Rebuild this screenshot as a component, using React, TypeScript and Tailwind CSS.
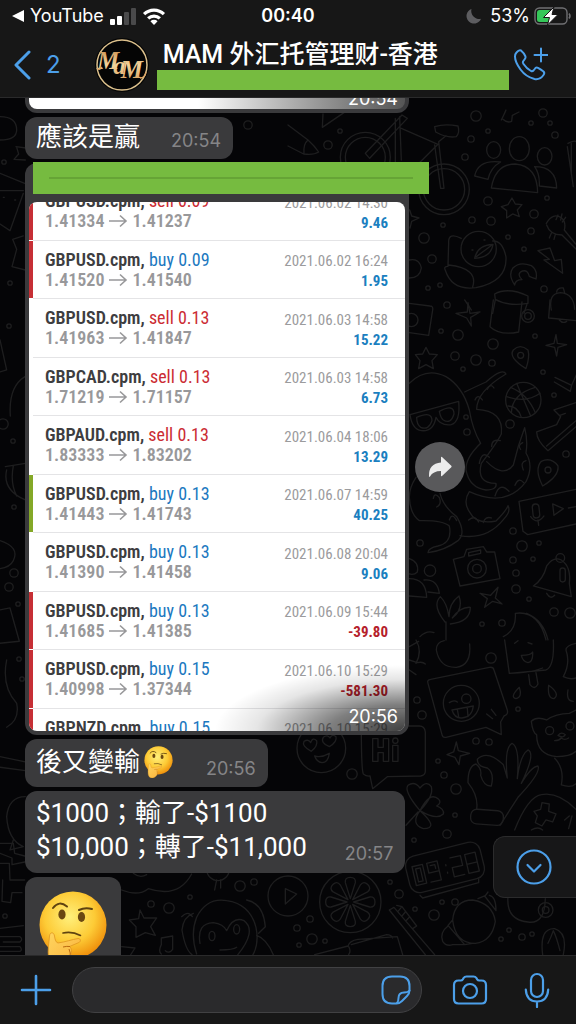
import type { ReactNode } from "react";
import clsx from "clsx";

type Trade = {
  symbol: string;
  side: "buy" | "sell";
  lots: string;
  open: string;
  close: string;
  date: string;
  profit: string;
  bar?: "red" | "green";
};

const trades: Trade[] = [
  { symbol: "GBPUSD.cpm", side: "sell", lots: "0.09", open: "1.41334", close: "1.41237", date: "2021.06.02 14:30", profit: "9.46", bar: "red" },
  { symbol: "GBPUSD.cpm", side: "buy", lots: "0.09", open: "1.41520", close: "1.41540", date: "2021.06.02 16:24", profit: "1.95", bar: "red" },
  { symbol: "GBPUSD.cpm", side: "sell", lots: "0.13", open: "1.41963", close: "1.41847", date: "2021.06.03 14:58", profit: "15.22" },
  { symbol: "GBPCAD.cpm", side: "sell", lots: "0.13", open: "1.71219", close: "1.71157", date: "2021.06.03 14:58", profit: "6.73" },
  { symbol: "GBPAUD.cpm", side: "sell", lots: "0.13", open: "1.83333", close: "1.83202", date: "2021.06.04 18:06", profit: "13.29" },
  { symbol: "GBPUSD.cpm", side: "buy", lots: "0.13", open: "1.41443", close: "1.41743", date: "2021.06.07 14:59", profit: "40.25", bar: "green" },
  { symbol: "GBPUSD.cpm", side: "buy", lots: "0.13", open: "1.41390", close: "1.41458", date: "2021.06.08 20:04", profit: "9.06" },
  { symbol: "GBPUSD.cpm", side: "buy", lots: "0.13", open: "1.41685", close: "1.41385", date: "2021.06.09 15:44", profit: "-39.80", bar: "red" },
  { symbol: "GBPUSD.cpm", side: "buy", lots: "0.15", open: "1.40998", close: "1.37344", date: "2021.06.10 15:29", profit: "-581.30", bar: "red" },
  { symbol: "GBPNZD.cpm", side: "buy", lots: "0.15", open: "", close: "", date: "2021.06.10 15:29", profit: "", bar: "red" },
];

/* Small bubbles scattered between the doodles: x, y, radius */
const dots = [
  [476, 116, 6], [543, 113, 5], [531, 123, 3], [550, 123, 3], [555, 135, 4], [488, 131, 3], [471, 139, 4], [465, 157, 4], [328, 145, 5],
  [340, 131, 3], [488, 201, 5], [547, 198, 3], [534, 214, 5], [472, 220, 4], [491, 221, 5], [443, 225, 3], [424, 238, 6], [508, 237, 3],
  [531, 231, 4], [432, 259, 5], [524, 249, 3], [440, 285, 3], [428, 288, 3], [544, 289, 4], [447, 305, 4], [248, 125, 5], [458, 335, 6],
  [493, 344, 6], [441, 331, 3], [455, 356, 5], [476, 360, 6], [492, 363, 4], [463, 369, 3], [535, 336, 3], [543, 372, 3], [554, 395, 3],
  [510, 424, 5], [566, 454, 4], [466, 417, 3], [467, 432, 4], [513, 531, 4], [522, 546, 6], [539, 543, 3], [513, 560, 4], [533, 559, 3],
  [516, 573, 4], [516, 589, 5], [529, 599, 3], [554, 612, 5], [570, 613, 6], [482, 624, 3], [502, 623, 4], [420, 543, 4], [491, 658, 6],
  [417, 700, 4], [422, 715, 5], [518, 709, 3], [476, 741, 4], [489, 742, 4], [352, 774, 6], [438, 761, 3], [444, 775, 4], [456, 789, 6],
  [455, 815, 3], [414, 840, 3], [447, 834, 5], [390, 882, 3], [399, 894, 5], [434, 915, 6], [442, 902, 3], [455, 902, 4], [415, 909, 3],
  [310, 919, 4], [312, 939, 6], [297, 928, 4], [299, 945, 3], [325, 941, 3], [501, 939, 3], [522, 937, 4], [509, 930, 3], [532, 934, 3],
  [240, 886, 6], [254, 882, 4], [169, 908, 6], [151, 904, 4], [190, 897, 3], [5, 916, 3], [4, 162, 3], [10, 283, 3], [9, 326, 3],
  [3, 424, 6], [13, 441, 3], [14, 507, 3], [14, 573, 5], [9, 587, 5], [18, 604, 3], [19, 659, 3], [22, 679, 3],
];

function Wallpaper() {
  return (
    <svg
      aria-hidden="true"
      viewBox="0 98 576 858"
      preserveAspectRatio="xMinYMin slice"
      className="absolute inset-0 h-full w-full"
      fill="none"
      stroke="#1e1e1f"
      strokeLinecap="round"
      strokeLinejoin="round"
    >
      <g strokeWidth="1.3">
        {dots.map(([x, y, r]) => (
          <circle key={`${x}-${y}`} cx={x} cy={y} r={r - 0.8} />
        ))}
      </g>

      {/* bicycle, people, duck, guitar */}
      <g transform="translate(288 110) scale(.3333)" strokeWidth="4">
        <circle cx="232" cy="142" r="75" />
        <circle cx="232" cy="142" r="60" />
        <circle cx="468" cy="238" r="76" />
        <circle cx="468" cy="238" r="62" />
        <path d="M232 130l110-115 16 10L245 145zM340 55l110 48-60 60M335 20l5 130M322 25v130M440 105l18 130h10L452 95l22-18M440 50q30-10 70-2 6 20-5 32-28 5-62-14z" />
        <path d="M0 45l60 45q20 18 32 36-15 10-45 6L0 108M60 90q-15 12-12 42" />
        <path d="M105 12l-2 40 65-44" />
        <ellipse cx="617" cy="120" rx="21" ry="25" />
        <ellipse cx="694" cy="116" rx="30" ry="36" />
        <ellipse cx="770" cy="139" rx="22" ry="26" />
        <path d="M560 198q10-50 78-42-30 16-38 52zM610 234q12-72 72-72 66 6 67 86zM740 170q65 0 66 64l-52-6q2-36-14-58z" />
        <path d="M672 264l10 18 20 2-14 16 6 20-20-8-18 12 0-22-16-12 20-6z" />
        <path d="M640 30q10-20 14-30M645 28q12 12 26 6l2-18 20-10" />
        <path d="M840 100q20-10 24-5M838 110l18 120M850 100v90" />
        <circle cx="572" cy="417" r="53" />
        <path d="M560 445q8-40 55-42-6 40-55 42zM565 440l46-34M520 385q-40-20-38 14l-2 70q-14 0-8 12 20 62 92 52 94-18 90-92-10-50-40-48M482 465q90 10 72 66M552 420h3M588 390h3" />
        <path d="M775 340q20-34 46-16 14 12 8 36l34 42M776 345q10 30 46 30l42 42M810 315l-6 14M822 312l-4 18M833 322l-10 14M790 370l-6 14M802 374l-4 14" />
        <path d="M750 422l36-8 14 38 20-4 4 42-56-40 16-2z" />
        <path d="M680 525q-20-30-6-50 20-22 56-8 20 14 14 40-12-4-20-8-4-20-20-16-20 8-2 26-20 0-22 16z" />
        <path d="M620 552q40-22 100 6v22q-60 10-98-12zM622 570l-8 40M718 580l-10 30M790 600q-10-50 28-52 40 4 42 50M806 546q2-14 20-12l4 14M530 570l20 30" />
        <path d="M365 300l6 18 22 6-22 10-5 20M364 450q30-6 36 24-4 30-36 30" />
      </g>

      {/* octopus, ball, camera, bell */}
      <g transform="translate(400 300) scale(.3333)" strokeWidth="4">
        <path d="M28 250q50-50 110-20 50 30 70 100 10 60 34 100-46 44-44 80 10 54 60 60 34 0 30-20-60 0-44-60 46-60 60-88 8-70-74-74 0-54 88-106-10-20-60 24-44 20-64 30" />
        <path d="M260 485q50 50 80 10 14-60 34-112 10 40 4 76 24 40 0 86-60 80-170 30-20 30 0 60 20 40 80 28 30-30 36-46 10 18-14 42-50 62-130 48M120 580q10 40 50 70 30 50 4 72-40 30-90 36 0-14 30-20 44-10 34-60-20-18-90-16-28-20-30-70 0-30 20-60" />
        <path d="M30 344l146-40q6 60-22 70-34 4-46-22-8 44-44 40-28-4-34-48zM50 352q46-20 46 10-10 30-34 20-12-8-12-30zM118 334q44-24 44 8-10 32-32 18-8-6-12-26z" />
        <path d="M225 300q8-20 22 0M262 268q10-20 20-4M275 440q0-24 26-18M238 490q8-40 30-18M285 588q14-44 42-14M345 556q10-26 26-8M370 510q-10-24 8-28M362 448q-10-12 6-20M206 660q20-16 30 6M250 668q6-20 24-14" />
        <path d="M100 595q4-20 18-2 8 20-8 28M148 660q8-24 22 2" />
        <path d="M78 142l10 20 24 2-16 18 4 24-22-12-22 12 4-24-14-18 22-2z" />
        <path d="M204 8l6 32 30-4-28 16 2 26-14-24-32-14 34-4zM468 104l4 26 28 4-26 8-4 26-6-26-26-6 24-6zM240 880l32 6 22-24-8 32 20 18-28-8-24 18 8-26z" />
        <circle cx="370" cy="300" r="53" />
        <path d="M332 262q50 20 74 76M406 262q-70 20-72 76M350 250l42 98M320 290q60 20 100-10M324 318q30 0 40 34" />
        <path d="M378 206q-54-34-38-56 20-20 44 0 6 20-6 56zM428 558q-26-50-4-74 30-14 50 14 4 30-46 60z" />
        <circle cx="362" cy="166" r="9" />
        <circle cx="444" cy="510" r="9" />
        <path d="M280 0l-10 80q30 28 86 16l10-90" />
        <circle cx="384" cy="48" r="19" />
        <circle cx="384" cy="48" r="10" />
        <path d="M28 10l62 8q10 0 8 12l-12 76-58-8M450 0l-4 54 82 8M478 60q10 12 22 4" />
        <circle cx="34" cy="60" r="20" />
        <path d="M465 232l50 24-4 18-48-28M515 256l16-36M462 330l66-22M462 330l20 20-12 24-60 22q0 26 34 56l84-72M440 438l88-76M480 346l16-6" />
        <path d="M357 604l171-36M357 604l12 90 14 10 145-32M458 612l4 34 28-20zM505 624l23-4" />
        <rect x="398" y="612" width="20" height="42" rx="10" transform="rotate(-6 408 632)" />
        <path d="M392 650q20 26 40-2M414 660l2 16" />
        <path d="M160 778l32-8 8-22 50-8 10 16 24 0 16 80-120 22z" />
        <circle cx="231" cy="806" r="28" />
        <circle cx="231" cy="806" r="13" />
        <path d="M206 758l36-8 0 10-36 8z" />
        <path d="M400 858q30-20 40-60 20-30 44-18 30 20 24 70l6 40zM440 880q12 20 24 6" />
        <circle cx="481" cy="774" r="13" />
        <rect x="480" y="804" width="16" height="42" rx="8" />
        <circle cx="90" cy="812" r="17" />
        <path d="M28 776q30 10 24 40-10 10-24 6M28 836q50 0 52 56l-52-4M72 840q40-4 46 40l-34-4" />
        <path d="M135 966q-40-50-14-76 20 20 26 60 0-40 30-62 14 40-20 66 24-34 54-32 0 44-60 50M138 966v54M60 1010q20-20 42-12M310 1010q40-20 36-70 70-10 92 80M380 940q50 20 64 80" />
      </g>

      {/* emoji bubble, ice cream, bear, hand */}
      <g transform="translate(288 640) scale(.3333)" strokeWidth="4">
        <path d="M420 130q-4-10 8-12l176-36q12-2 14 8l40 120q4 14-10 18l-10 18 2 38-46-22-120 30q-10 2-12-8z" />
        <circle cx="520" cy="190" r="54" />
        <circle cx="535" cy="176" r="14" />
        <path d="M484 188q14-10 24-2M492 210l64-12q-4 34-34 36-22 2-30-24zM508 208l4 22M538 204l2 26M596 222l18 14M610 208l14 18" />
        <path d="M445 30q0-24 24-28M445 30q10 54 60 52 46-6 40-70" />
        <path d="M650 0l14 100 110-10q26-10 22-90M664 100q60 0 100-16M722 104l4 30q14 18 24-2l-6-34M700 46q30 0 34-10 2 30-14 32-16-4-20-22zM680 10l10-8M720 8l12 4" />
        <path d="M694 142q-30 30-10 34 20-4 10-34zM782 136q-4 40 16 40 20-14-16-40zM840 150q-6 34 16 34" />
        <path d="M864 210l-20 10q-40 0-68 20-30-12-46 4 4 34 16 40 0 60 60 66 40 0 58-16M800 355q30 30 20 80 30 10 44-4" />
        <circle cx="785" cy="272" r="12" />
        <circle cx="846" cy="258" r="12" />
        <path d="M810 286q10-12 22-2-6 12-22 2zM800 302q14 0 20-8 10 8 22 0" />
        <path d="M505 306l6 26 34 8-28 8-4 26-12-22-24-8 20-8z" />
        <path d="M566 508q6-40-26-80 0-50 24-56 18 14 14 34 10 34 32 32 10-40-12-54-30-4-30-26 30-30 78 16l12 40q-10-90 14-104 24 10 16 106 8-70 32-86 24 10-20 100 30-50 50-52 10 20-60 94l-54 84" />
        <rect x="548" y="510" width="98" height="44" rx="18" transform="rotate(4 597 532)" />
        <path d="M680 570q40-100 80-106 50-10 104 44M762 488l22 4-2 22 22 8-10 24-20-6-12 18-20-10 6-20-10-14 20-6zM830 540l14-12M842 566l10-38" />
        <path d="M220 260q0 130 6 142 10 8 20 6l8 38 44-36 100-2q14-2 14-14V276q-2-18-18-18h-38" />
        <path d="M254 296h16v26h16v-26h16v68h-16v-26h-16v26h-16zM314 316h16v48h-16z" />
        <circle cx="322" cy="302" r="8" />
        <circle cx="100" cy="325" r="73" />
        <path d="M70 334q-30-16-22-30 14-8 20 4 6-18 18-6 4 16-16 32zM124 320q-28-12-18-28 12-10 20 2 6-14 18-4 4 16-20 30zM80 348q20 6 44-8-4 28-22 28-16-2-22-20z" />
        <path d="M396 512q-50-60-36-76 20-14 36 8 20-24 34-4 8 28-34 72zM396 512q30-60 56-34 10 10-6 20 24 10 20 24-20 20-70-10zM396 512q-30 40 10 54 50 0-10-54zM390 516l-36 40" />
        <path d="M364 20l28-16M364 60l24 8q16-4 24 4M364 90l20 14M384 0q20 34 0 70" />
        <path d="M864 10q-30 6-30 20 14 40-8 80 20 10 38 4" />
      </g>

      {/* alarm clock, citrus, toothbrush, bulb */}
      <g transform="translate(288 830) scale(.3333)" strokeWidth="4">
        <rect x="356" y="56" width="230" height="112" rx="30" transform="rotate(-14 471 112)" />
        <path d="M396 196l8 8 168-46 0-12" />
        <g transform="rotate(-13 471 112)">
          <path d="M375 88h32v58h-32zM384 97h14v40h-14zM420 88h32v58h-32M420 88v30h32M429 97h14v12M475 105v3M475 128v3M492 88h32v30h-32v28h32M537 88h32v58h-32zM537 118h32" />
        </g>
        <circle cx="187" cy="216" r="92" />
        {[0, 45, 90, 135, 180, 225, 270, 315].map((angle) => (
          <path key={angle} d="M187 206l-15-48q-2-16 15-16t15 16z" transform={`rotate(${angle} 187 216)`} />
        ))}
        <circle cx="0" cy="198" r="60" />
        <path d="M-8 176v46l34-30z" />
        <path d="M304 240l14-8 122 142M304 240l108 134M326 226l16 4 44 58-12 8M340 232l-10 12M352 246l-10 12M364 262l-10 10" />
        <path d="M494 270q6-60 60-60 60 10 68 64-10 60-60 66-60 0-68-70zM494 270l-14 16 50 58 24-4M480 288q-26 20-16 46 10 16 30 10l34 0M570 206l20-8 34 44M590 200l10-14M604 196q20 4 20 44" />
        <path d="M80 374l100-26q4-16 30-20l118-8 16 54M182 350q8 12 0 24M190 344l106-30q14 0 18 10" />
        <path d="M660 200q-6 70 60 76 50 8 52-70" />
        <circle cx="773" cy="240" r="22" />
        <circle cx="773" cy="240" r="10" />
        <path d="M764 374q-10-80 36-78 40 12 26 78M780 340q10-20 16-38 10 20 20 60" />
        <path d="M730 0q20-12 34 0" />
      </g>

      {/* monkey, star, cloud, notes */}
      <g transform="translate(0 830) scale(.3333)" strokeWidth="4">
        <path d="M365 180q50 20 80-4 90 30 130-44M400 130q20 16 40 4" />
        <circle cx="654" cy="118" r="34" />
        <path d="M640 118q14-18 28 0-10 20-28 0M650 150l-6 30M662 150l0 24" />
        <path d="M420 240l12 24 38 0-18 26 14 26-30-8-28 14 0-32-20-20 28-4z" />
        <path d="M590 372q-20-60 0-110 30-60 90-50 70 10 88 80 10 50-10 84M600 340q-10-60 40-62 30 4 40 24 20-44 52-30 40 30-20 104M580 250q-30 10-34 50 10 60 30 74M740 210q50 10 56 80l-20 20M770 316q30 10 50 58M660 360q40 0 50-8M545 260q20-20 32 0" />
        <ellipse cx="636" cy="318" rx="9" ry="14" />
        <ellipse cx="710" cy="298" rx="9" ry="14" />
        <path d="M484 344l0-20 34-6v40q-10 14-22 4M484 344q-10 20 0 28M365 350l40 4-14 22" />
        <path d="M0 40h40l4 30 30 8M0 70l36 14 0 20 38-8M0 100h28l2 50h44M8 150l-2 64 26 4 4-30h30M0 295l70-8M0 320h60q10 8 0 16H10M0 350h60q8 10 0 14H0" />
      </g>

      {/* left margin */}
      <g transform="translate(0 110) scale(.3333)" strokeWidth="4">
        <path d="M0 20q50 0 50 40 0 30-50 30M48 110l30 4M50 112l6 20-14 16 34 2M0 190l74 30M0 242h70M70 250l-40 112-30-20M10 262h3M44 270h3M70 378l-32 10 12 30-14 52 40 10" />
        <path d="M0 690l20 90-20 6M75 800q-50 30-44 118M16 1070l60-10M20 1080q-14 60 56 90M40 1068q-10 50 10 90M0 1292q60 20 40 60-10 20-40 24M0 1500l30-6 28 100-58 6" />
        <path d="M20 1650q-16 80 30 130 10 50-30 72M0 1940l76 16M0 1972l76 10M76 2060q-50 0-56 60 4 70 50 90l-40 10 10-30" />
      </g>
    </svg>
  );
}

function ThinkingFace({ className }: { className?: string }) {
  return (
    <svg viewBox="0 0 68 76" role="img" aria-label="thinking face" className={className}>
      <defs>
        <radialGradient id="face" cx="45%" cy="38%" r="62%">
          <stop offset="0" stopColor="#fff07c" />
          <stop offset=".6" stopColor="#fdcb36" />
          <stop offset="1" stopColor="#ef900c" />
        </radialGradient>
        <linearGradient id="hand" x1="0" y1="0" x2="1" y2="1">
          <stop offset="0" stopColor="#ffd55f" />
          <stop offset="1" stopColor="#f9b03a" />
        </linearGradient>
      </defs>
      <circle cx="34" cy="34" r="33.5" fill="url(#face)" />
      <g fill="none" stroke="#5f4310" strokeLinecap="round">
        <path d="M14 17q6-8 14-1.500" strokeWidth="2" />
        <path d="M40 19q6-3 13-1" strokeWidth="2" />
        <path d="M24 42q9-2 17.500 2.500" strokeWidth="1.6" />
      </g>
      <ellipse cx="23" cy="23.5" rx="3.6" ry="5" fill="#6b4812" />
      <ellipse cx="42.5" cy="26" rx="3.6" ry="5" fill="#6b4812" />
      <path
        d="M9.500 67C8.500 58 10 52 10.500 45C11 40.500 15 41 15.500 45C16 49 17 51.500 19 52C26 51 33 48.500 39 47.500C42 47.500 42 50.500 40 51.500L30.500 55.500C33 57 33 62 31.500 66C30 72 24 76 19 76C13 76 10.500 72 9.500 67z"
        fill="url(#hand)"
        stroke="#e0951f"
        strokeWidth=".8"
      />
      <path d="M24 56q4-1 7-.5M30 58q2 4 1 8" fill="none" stroke="#b9690f" strokeWidth="1" />
    </svg>
  );
}

function Bubble({ children, className = "w-fit" }: { children: ReactNode; className?: string }) {
  return (
    <div
      className={clsx(
        "relative flex items-end bg-[#3a3a3c] font-[Roboto,'Noto_Sans_CJK_TC',sans-serif] text-[26px] text-white",
        className,
      )}
    >
      {children}
    </div>
  );
}

function Time({ children, className = "text-[#858587]" }: { children: string; className?: string }) {
  return <time className={clsx("font-[Inter,sans-serif] text-lg leading-5", className)}>{children}</time>;
}

function Arrow() {
  return (
    <svg aria-label="to" viewBox="0 0 20 14" className="mx-1 inline h-[14px] w-5 align-[-1px]" fill="none" stroke="currentColor" strokeWidth="1.6">
      <path d="M1 7h17M12 1.500L18 7l-6 5.500" />
    </svg>
  );
}

function TradeRow({ trade }: { trade: Trade }) {
  return (
    <tr>
      <td
        className={clsx(
          "w-1 border-b border-white/70 bg-clip-padding p-0",
          trade.bar === "red" && "bg-[#c62f35]",
          trade.bar === "green" && "bg-[#84a827]",
        )}
      />
      <td className="border-b border-[#e4e4e6] p-0 pt-px pl-3 align-middle text-lg leading-5 whitespace-nowrap">
        <div className="font-semibold text-[#3d3d40]">
          {trade.symbol},{" "}
          <span className={clsx("font-normal", trade.side === "buy" ? "text-[#1b78c0]" : "text-[#cb2b33]")}>
            {trade.side} {trade.lots}
          </span>
        </div>
        <div className="h-5 font-semibold text-[#98989a]">
          {trade.open && (
            <>
              {trade.open}
              <Arrow />
              {trade.close}
            </>
          )}
        </div>
      </td>
      <td className="border-b border-[#e4e4e6] p-0 pt-1 pr-[17px] text-right align-middle text-[15px] leading-5 whitespace-nowrap">
        <div className="text-[#9b9b9d]">{trade.date}</div>
        <div className={clsx("h-5 font-bold", trade.profit.startsWith("-") ? "text-[#b5202a]" : "text-[#1b7fc0]")}>{trade.profit}</div>
      </td>
    </tr>
  );
}

function StatusBar() {
  return (
    <div className="grid h-8 grid-cols-3 items-center px-3 font-[Inter,sans-serif] text-lg text-white">
      <div className="flex items-center gap-[6px]">
        <svg viewBox="0 0 12 12" className="h-3 w-3" fill="#fff">
          <path d="M12 0v12L0 6z" />
        </svg>
        <span>YouTube</span>
        <svg viewBox="0 0 26 17" className="h-[17px] w-[26px]">
          <rect x="0" y="11" width="5" height="6" rx="1" fill="#fff" />
          <rect x="7" y="8" width="5" height="9" rx="1" fill="#fff" />
          <rect x="14" y="4" width="5" height="13" rx="1" fill="#4a4a4b" />
          <rect x="21" y="0" width="5" height="17" rx="1" fill="#4a4a4b" />
        </svg>
        <svg viewBox="0 0 24 18" className="h-[17px] w-6" fill="none" stroke="#fff" strokeWidth="3.4">
          <path d="M1.500 6.500a15 15 0 0 1 21 0M5.800 11a9 9 0 0 1 12.400 0" />
          <path d="M12 18l-3.800-4a5.400 5.400 0 0 1 7.600 0z" fill="#fff" stroke="none" />
        </svg>
      </div>
      <div className="text-center font-semibold">00:40</div>
      <div className="flex items-center justify-end gap-2">
        <svg viewBox="0 0 16 16" className="h-4 w-4" fill="#5d5d60">
          <path d="M5.500 1A7.500 7.500 0 1 0 15 10.800 8 8 0 0 1 5.500 1z" />
        </svg>
        <span>53%</span>
        <svg viewBox="0 0 38 20" className="-mr-2 -ml-1 h-5 w-[38px]">
          <rect x="1" y="2" width="32" height="16" rx="4.5" fill="none" stroke="#707073" strokeWidth="1.4" />
          <path d="M35 7.500q2 2.500 0 5" fill="none" stroke="#707073" strokeWidth="1.5" />
          <rect x="3" y="4" width="14" height="12" rx="2.5" fill="#35c759" />
          <path d="M20 1L9.500 11.500h6L13.500 19 24 8.500h-6z" fill="#fff" stroke="#171717" strokeWidth="1" />
        </svg>
      </div>
    </div>
  );
}

function GroupAvatar() {
  return (
    <svg viewBox="0 0 54 54" role="img" aria-label="MAM" className="h-[54px] w-[54px] shrink-0">
      <defs>
        <linearGradient id="gold" x1="0" y1="0" x2="0" y2="1">
          <stop offset="0" stopColor="#c58948" />
          <stop offset=".5" stopColor="#f3d39b" />
          <stop offset="1" stopColor="#d99a58" />
        </linearGradient>
      </defs>
      <circle cx="27" cy="27" r="27" fill="#050505" />
      <circle cx="27" cy="27" r="25" fill="none" stroke="#dcc08c" strokeWidth="1.5" />
      <text x="2" y="31" fill="url(#gold)" fontFamily="'Liberation Serif', serif" fontStyle="italic" fontSize="25" fontWeight="700">
        <tspan>M</tspan>
        <tspan dx="-6" dy="5">a</tspan>
        <tspan dx="-5" dy="4">M</tspan>
      </text>
      <path d="M2 30q2 3 5-1M45 40q5 0 6-6" fill="none" stroke="#dda565" strokeWidth="1.3" />
    </svg>
  );
}

function ChatHeader() {
  return (
    <header className="z-10 shrink-0 border-b border-[#2a2a2b] bg-[#171717]">
      <StatusBar />
      <div className="flex h-[65px] items-center pr-7 pl-3">
        <button type="button" aria-label="Back, 2 unread" className="flex items-center gap-[14px] text-[#4c9fe9]">
          <svg viewBox="0 0 20 30" className="h-[30px] w-5" fill="none" stroke="currentColor" strokeWidth="3" strokeLinecap="round" strokeLinejoin="round">
            <path d="M17 2L4 15l13 13" />
          </svg>
          <span className="font-[Inter,sans-serif] text-2xl">2</span>
        </button>
        <div className="ml-[34px]">
          <GroupAvatar />
        </div>
        <div className="ml-2 flex min-w-0 flex-1 flex-col">
          <h1 className="ml-[6px] truncate font-[Roboto,'Noto_Sans_CJK_SC',sans-serif] text-[25px] leading-[30px] font-medium text-white">
            MAM 外汇托管理财-香港
          </h1>
          <div className="h-5 bg-[#76bb40]" />
        </div>
        <button type="button" aria-label="Start group call" className="ml-1 text-[#4c9fe9]">
          <svg viewBox="0 0 35 35" className="h-[35px] w-[35px]" fill="none" stroke="currentColor" strokeWidth="2" strokeLinecap="round" strokeLinejoin="round">
            <path d="M3.500 5.500Q6 2.500 8 3.500q3 2.500 4.500 6 .5 1.500-1 3l-1.500 2q-.5 1 .5 2.500 3 4.500 7.500 7 1.500.5 2.500-.5l2-2.500q1-1 2.500-.2 3 1.700 5.500 3.700 1.500 1.500 0 3.500-3.500 5-9 4Q13 30 7.500 22.500 2 15 2 9.500q0-2.500 1.500-4z" />
            <path d="M28 1.500v13M21.500 8h13" />
          </svg>
        </button>
      </div>
    </header>
  );
}

function TradeScreenshot() {
  return (
    <div className="relative h-[529px] w-full overflow-hidden rounded-lg bg-white">
      <table className="-mt-5 h-[585px] w-full border-separate border-spacing-0 font-['Roboto_Condensed','Liberation_Sans_Narrow',Roboto,sans-serif]">
        <tbody>
          {trades.map((trade, i) => (
            <TradeRow key={i} trade={trade} />
          ))}
        </tbody>
      </table>
      <div className="absolute inset-0 bg-[radial-gradient(ellipse_190px_66px_at_100%_100%,rgba(0,0,0,0.75),rgba(0,0,0,0.5)_40%,rgba(0,0,0,0.1)_78%,transparent)]" />
      <Time className="absolute right-[7px] bottom-1 text-white">20:56</Time>
    </div>
  );
}

function Composer() {
  return (
    <footer className="z-10 flex h-[69px] shrink-0 items-center border-t border-[#2a2a2b] bg-[#171717] pr-[26px] pl-5 text-[#4c9fe9]">
      <button type="button" aria-label="Attach">
        <svg viewBox="0 0 32 32" className="h-8 w-8" stroke="currentColor" strokeWidth="2.6" strokeLinecap="round">
          <path d="M16 2v28M2 16h28" />
        </svg>
      </button>
      <div className="ml-5 flex h-[46px] min-w-0 flex-1 items-center rounded-full border border-[#414143] bg-[#2a2a2c] pr-[10px] pl-5">
        <input type="text" aria-label="Message" className="min-w-0 flex-1 bg-transparent text-lg text-white outline-none" />
        <button type="button" aria-label="Stickers">
          <svg viewBox="0 0 30 30" className="h-[30px] w-[30px]" fill="none" stroke="currentColor" strokeWidth="2" strokeLinecap="round" strokeLinejoin="round">
            <path d="M15.500 28.500H11q-9.500 0-9.500-9.500v-8Q1.500 1.500 11 1.500h8q9.500 0 9.500 9.500v4.500q0 3-2.500 5.500l-5 5q-2.500 2.500-5.500 2.500z" />
            <path d="M16 28q1.500-1.500 1.500-5 0-5.500 5.500-5.500 4 0 5.500-2" />
          </svg>
        </button>
      </div>
      <button type="button" aria-label="Camera" className="ml-[30px]">
        <svg viewBox="0 0 36 32" className="h-8 w-9" fill="none" stroke="currentColor" strokeWidth="2.2" strokeLinejoin="round">
          <path d="M2 11q0-4.500 4.500-4.500h2.300q1.200 0 2-1.200l.8-1.300Q12.600 2.500 14.500 2.500h7q1.900 0 2.900 1.500l.8 1.300q.8 1.200 2 1.200h2.300Q34 6.500 34 11v14q0 4.500-4.500 4.500h-23Q2 29.500 2 25z" />
          <circle cx="18" cy="17" r="7" />
        </svg>
      </button>
      <button type="button" aria-label="Record voice message" className="ml-9">
        <svg viewBox="0 0 26 36" className="h-9 w-[26px]" fill="none" stroke="currentColor" strokeWidth="2.2" strokeLinecap="round">
          <rect x="7" y="2" width="12" height="23" rx="6" />
          <path d="M1.800 17.500Q2.500 29.500 13 29.500t11.200-12M13 29.500V35" />
        </svg>
      </button>
    </footer>
  );
}

export default function App() {
  return (
    <div className="flex h-screen w-full flex-col overflow-hidden bg-[#050507]">
      <ChatHeader />

      <main className="relative min-h-0 flex-1 overflow-hidden">
        <Wallpaper />

        <div className="relative flex flex-col gap-1 pl-[25px]">
          {/* Tail end of the previous photo message */}
          <Bubble className="h-[15px] w-[384px] rounded-b-xl px-1 pb-1">
            <div className="relative h-full w-full overflow-hidden rounded-b-lg bg-linear-to-r from-white from-45% to-[#555]">
              <Time className="absolute right-[7px] bottom-0 text-white">20:54</Time>
            </div>
          </Bubble>

          <Bubble className="w-fit gap-[31px] rounded-xl pt-[3px] pr-3 pb-[5px] pl-[11px]">
            <p className="leading-[34px]">應該是贏</p>
            <Time className="pb-[3px] text-[#858587]">20:54</Time>
          </Bubble>

          <div className="flex items-center gap-[6px]">
            <Bubble className="w-[384px] rounded-xl px-1 pt-[39px] pb-1">
              <div className="absolute -top-px left-2 flex h-8 w-[396px] items-center bg-[#76bb40] px-4">
                <div className="h-[2px] w-full bg-[#66a436]" />
              </div>
              <TradeScreenshot />
            </Bubble>
            <div className="pt-9">
              <button type="button" aria-label="Forward" className="flex h-[50px] w-[50px] items-center justify-center rounded-full bg-[#59595b]">
                <svg viewBox="0 0 24 22" className="h-[22px] w-6" fill="#ececec">
                  <path d="M13 1.500q0-1.200 1-.4l9.300 8.700q.7.700 0 1.400L14 20q-1 .8-1-.4V15Q5 15 2 20.500q-.8 1-1-.3Q.5 7.500 13 6.500z" />
                </svg>
              </button>
            </div>
          </div>

          <Bubble className="w-fit gap-[33px] rounded-xl pt-[6px] pr-3 pb-2 pl-[11px]">
            <p className="flex items-center gap-1 leading-[34px]">
              後又變輸
              <ThinkingFace className="h-8 w-[29px]" />
            </p>
            <Time>20:56</Time>
          </Bubble>

          <Bubble className="w-fit gap-[38px] rounded-xl pt-[5px] pr-3 pb-[9px] pl-[11px]">
            <p className="leading-[34px]">
              $1000；輸了-$1100
              <br />
              $10,000；轉了-$11,000
            </p>
            <Time>20:57</Time>
          </Bubble>

          <Bubble className="w-fit rounded-xl px-[14px] pt-[14px] pb-8">
            <ThinkingFace className="h-[76px] w-[68px]" />
          </Bubble>
        </div>

        <button
          type="button"
          aria-label="Scroll to latest"
          className="absolute right-0 bottom-[57px] flex h-[62px] w-[83px] items-center rounded-l-xl border border-r-0 border-[#2b2b2c] bg-[#171718] pl-[22px] text-[#4c9fe9]"
        >
          <svg viewBox="0 0 36 36" className="h-9 w-9" fill="none" stroke="currentColor" strokeWidth="2.2" strokeLinecap="round" strokeLinejoin="round">
            <circle cx="18" cy="18" r="16.5" />
            <path d="M11.500 16l6.500 6.500 6.500-6.500" />
          </svg>
        </button>
      </main>

      <Composer />
    </div>
  );
}
